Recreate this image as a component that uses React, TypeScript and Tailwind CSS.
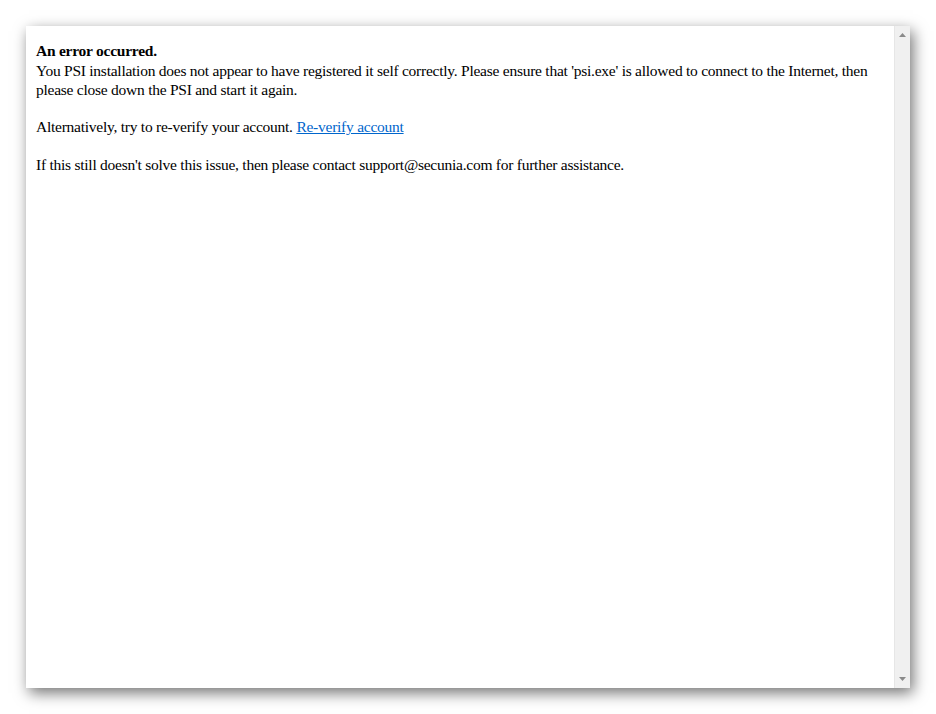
import React from 'react';

const ScrollArrow: React.FC<{ up?: boolean }> = ({ up }) => (
  <svg width="7" height="4" viewBox="0 0 7 4" className="block">
    {up ? <polygon points="3.5,0 7,4 0,4" fill="#8a8a8a" /> : <polygon points="0,0 7,0 3.5,4" fill="#8a8a8a" />}
  </svg>
);

const App: React.FC = () => {
  return (
    <div className="w-[936px] h-[714px] bg-white pl-[26px] pt-[26px] overflow-hidden">
      <div className="w-[884px] h-[662px] flex bg-white shadow-[3px_5px_14px_rgba(0,0,0,0.55)]">
        <div
          className="flex-1 pl-[10px] pr-[10px] pt-[14px] text-black text-[15.5px] leading-[18.7px] tracking-[-0.25px]"
          style={{ fontFamily: '"Liberation Serif", "Times New Roman", serif' }}
        >
          <div className="font-bold leading-[22px]">An error occurred.</div>
          You PSI installation does not appear to have registered it self correctly. Please ensure that 'psi.exe' is
          allowed to connect to the Internet, then please close down the PSI and start it again.
          <br />
          <br />
          Alternatively, try to re-verify your account.{' '}
          <a href="#" className="text-[#0066cc] underline">
            Re-verify account
          </a>
          <br />
          <br />
          If this still doesn't solve this issue, then please contact support@secunia.com for further assistance.
        </div>
        <div className="w-[16px] bg-[#f0f0f0] border-l border-[#e6e6e6] flex flex-col items-center justify-between py-[7px]">
          <ScrollArrow up />
          <ScrollArrow />
        </div>
      </div>
    </div>
  );
};

export default App;
